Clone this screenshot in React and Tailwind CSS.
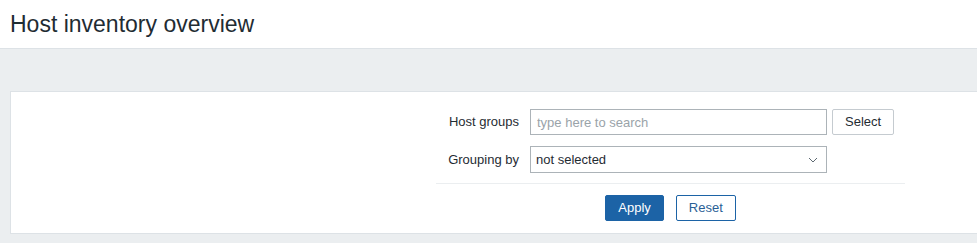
import React from 'react'

function Row({ label, children }) {
  return (
    <div className="flex items-center">
      <div className="w-[84px] text-right pr-px text-[13px] text-[#1f2c33]">{label}</div>
      <div className="ml-[10px] flex items-center gap-[5px]">{children}</div>
    </div>
  )
}

export default function App() {
  return (
    <div className="w-[977px] h-[243px] overflow-hidden bg-[#ebeef0] font-['Liberation_Sans',Arial,sans-serif]">
      <div className="h-[49px] bg-white border-b border-[#dde2e6] flex items-center pl-[10px]">
        <h1 className="text-[23px] text-[#1f2c33] leading-normal">Host inventory overview</h1>
      </div>

      <div className="pt-[42px] pl-[10px]">
        <div className="bg-white border border-r-0 border-[#dde2e6] h-[143px] flex">
          <div className="w-[425px] shrink-0" />
          <div className="w-[469px] shrink-0 pt-[17px]">
            <div className="flex flex-col gap-[11px]">
              <Row label="Host groups">
                <input
                  placeholder="type here to search"
                  className="w-[297px] h-[26px] border border-[#acb3b8] px-[6px] text-[13px] text-[#1f2c33] placeholder:text-[#9aa3a9] outline-none"
                />
                <button className="h-[26px] px-3 border border-[#c5cbd0] rounded-[2px] bg-white text-[13px] text-[#1f2c33]">
                  Select
                </button>
              </Row>
              <Row label="Grouping by">
                <div className="w-[297px] h-[27px] border border-[#acb3b8] pl-[5px] pr-[8px] flex items-center justify-between text-[13px] text-[#1f2c33]">
                  <span>not selected</span>
                  <svg width="10" height="6" viewBox="0 0 10 6" fill="none">
                    <path d="M1 1l4 4 4-4" stroke="#5e6a72" strokeWidth="1" />
                  </svg>
                </div>
              </Row>
            </div>
            <div className="mt-[10px] border-t border-[#ebeef0]" />
            <div className="mt-[11px] flex justify-center gap-3">
              <button className="h-[26px] px-3 border border-[#1c63a6] bg-[#1c63a6] rounded-[2px] text-[13px] text-white">
                Apply
              </button>
              <button className="h-[26px] px-3 border border-[#1c63a6] bg-white rounded-[2px] text-[13px] text-[#2a5f96]">
                Reset
              </button>
            </div>
          </div>
        </div>
      </div>
    </div>
  )
}
